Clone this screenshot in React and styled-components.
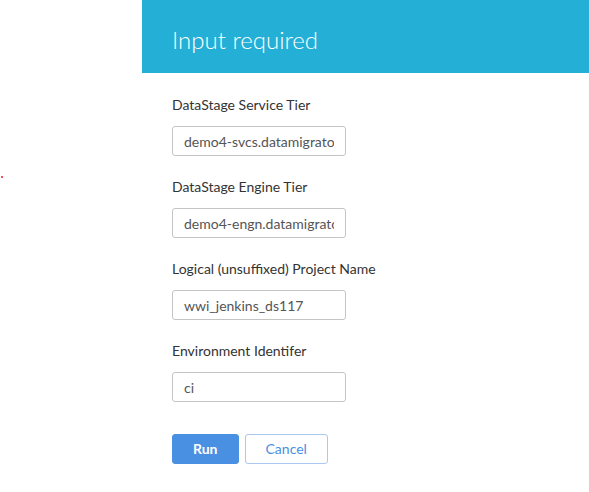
import styled, { createGlobalStyle } from "styled-components";

const GlobalStyle = createGlobalStyle`
  html, body {
    margin: 0;
    padding: 0;
    background: #ffffff;
    font-family: Lato, "Open Sans", sans-serif;
  }
`;

const fields = [
  { label: "DataStage Service Tier", value: "demo4-svcs.datamigrator.local" },
  { label: "DataStage Engine Tier", value: "demo4-engn.datamigrator.local" },
  { label: "Logical (unsuffixed) Project Name", value: "wwi_jenkins_ds117" },
  { label: "Environment Identifer", value: "ci" },
];

export default function App() {
  return (
    <>
      <GlobalStyle />
      <StyledPage>
        <StyledMarker />
        <StyledPanel>
          <StyledHeader>
            <StyledTitle>Input required</StyledTitle>
          </StyledHeader>
          <StyledForm>
            {fields.map((field) => (
              <StyledField key={field.label}>
                <StyledLabel>{field.label}</StyledLabel>
                <StyledInput type="text" defaultValue={field.value} />
              </StyledField>
            ))}
            <StyledActions>
              <StyledButton type="button" $primary>
                Run
              </StyledButton>
              <StyledButton type="button">Cancel</StyledButton>
            </StyledActions>
          </StyledForm>
        </StyledPanel>
      </StyledPage>
    </>
  );
}

const StyledPage = styled.div`
  position: relative;
  display: flex;
  min-height: 492px;
  padding-left: 142px;
  box-sizing: border-box;
`;

// stray red pixel at the left edge of the capture
const StyledMarker = styled.span`
  position: absolute;
  left: 1px;
  top: 176px;
  width: 2px;
  height: 2px;
  background: #e8585a;
`;

const StyledPanel = styled.div`
  flex: 1;
  display: flex;
  flex-direction: column;
`;

const StyledHeader = styled.header`
  background-color: #24afd6;
  height: 73px;
  display: flex;
  align-items: center;
  padding-left: 30px;
`;

const StyledTitle = styled.h1`
  margin: 0;
  margin-top: 6px;
  color: #ffffff;
  font-family: Lato, sans-serif;
  font-weight: 300;
  font-size: 24px;
`;

const StyledForm = styled.form`
  display: flex;
  flex-direction: column;
  padding: 22px 30px 0;
`;

const StyledField = styled.div`
  display: flex;
  flex-direction: column;
  align-items: flex-start;
  gap: 11px;
  margin-bottom: 21px;
`;

const StyledLabel = styled.label`
  font-size: 14px;
  line-height: 20px;
  color: #333333;
`;

const StyledInput = styled.input`
  box-sizing: border-box;
  width: 174px;
  height: 30px;
  padding: 0 11px;
  border: 1px solid #c4c4c4;
  border-radius: 3px;
  font-family: Lato, sans-serif;
  font-size: 14px;
  color: #555555;
  background: #ffffff;
  outline: none;
`;

const StyledActions = styled.div`
  display: flex;
  gap: 6px;
  margin-top: 11px;
`;

const StyledButton = styled.button`
  box-sizing: border-box;
  height: 30px;
  padding: 0 20px 1px;
  border-radius: 3px;
  font-family: Lato, sans-serif;
  font-size: 14px;
  font-weight: ${(p) => (p.$primary ? 700 : 400)};
  cursor: pointer;
  border: 1px solid ${(p) => (p.$primary ? "#4a90e2" : "#aac8f0")};
  background: ${(p) => (p.$primary ? "#4a90e2" : "#ffffff")};
  color: ${(p) => (p.$primary ? "#ffffff" : "#4a90e2")};
`;
